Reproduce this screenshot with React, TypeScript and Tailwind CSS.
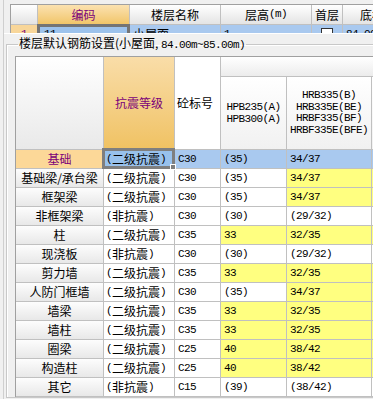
import React from 'react'

const cjk = "font-['Noto_Sans_CJK_SC','Noto_Sans',sans-serif]"
const mono = "font-['Liberation_Mono','Noto_Sans_CJK_SC',monospace] text-[11px] tracking-[-0.6px]"

interface SteelRow {
  name: string
  grade: string
  conc: string
  hpb: string
  hrb: string
  yHpb: boolean
  yHrb: boolean
}

const rows: SteelRow[] = [
  { name: '基础', grade: '二级抗震', conc: 'C30', hpb: '(35)', hrb: '34/37', yHpb: false, yHrb: false },
  { name: '基础梁/承台梁', grade: '二级抗震', conc: 'C30', hpb: '(35)', hrb: '34/37', yHpb: false, yHrb: true },
  { name: '框架梁', grade: '二级抗震', conc: 'C30', hpb: '(35)', hrb: '34/37', yHpb: false, yHrb: true },
  { name: '非框架梁', grade: '非抗震', conc: 'C30', hpb: '(30)', hrb: '(29/32)', yHpb: false, yHrb: false },
  { name: '柱', grade: '二级抗震', conc: 'C35', hpb: '33', hrb: '32/35', yHpb: true, yHrb: true },
  { name: '现浇板', grade: '非抗震', conc: 'C30', hpb: '(30)', hrb: '(29/32)', yHpb: false, yHrb: false },
  { name: '剪力墙', grade: '二级抗震', conc: 'C35', hpb: '33', hrb: '32/35', yHpb: true, yHrb: true },
  { name: '人防门框墙', grade: '二级抗震', conc: 'C30', hpb: '(35)', hrb: '34/37', yHpb: false, yHrb: true },
  { name: '墙梁', grade: '二级抗震', conc: 'C35', hpb: '33', hrb: '32/35', yHpb: true, yHrb: true },
  { name: '墙柱', grade: '二级抗震', conc: 'C35', hpb: '33', hrb: '32/35', yHpb: true, yHrb: true },
  { name: '圈梁', grade: '二级抗震', conc: 'C25', hpb: '40', hrb: '38/42', yHpb: true, yHrb: true },
  { name: '构造柱', grade: '二级抗震', conc: 'C25', hpb: '40', hrb: '38/42', yHpb: true, yHrb: true },
  { name: '其它', grade: '非抗震', conc: 'C15', hpb: '(39)', hrb: '(38/42)', yHpb: false, yHrb: false },
]

const line = 'border-r border-b border-[#c0c0c0]'

function FloorTable() {
  const head = `h-[20px] ${line} bg-linear-to-b from-white to-[#e4e4e4] flex items-center justify-center`
  return (
    <div className="ml-[6px] mt-[4px] h-[29px] shrink-0 overflow-hidden border-l border-t border-[#a0a0a0]">
      <div className="grid grid-cols-[27px_92px_91px_91px_31px_200px]">
        <div className={head} />
        <div className={`h-[20px] ${line} bg-linear-to-b from-[#fbe2b0] to-[#f1c568] flex items-center justify-center text-[#7a007a]`}>编码</div>
        <div className={head}>楼层名称</div>
        <div className={head}>
          层高<span className={mono}>(m)</span>
        </div>
        <div className={head}>首层</div>
        <div className={`${head} justify-start pl-[17px]`}>底标高(m)</div>

        {/* 第一行被下面的面板盖住，只露出上半截 */}
        <div className={`h-[19px] ${line} bg-[#f8d699] flex items-center justify-center text-[#7a007a] ${mono}`}>1</div>
        <div className={`relative h-[19px] ${line} bg-[#9cc2ec] flex items-center pl-[6px] ${mono}`}>
          11
          <div className="absolute -left-[1px] -top-[1px] -right-[1px] -bottom-[1px] border-[3px] border-[#747474]" />
        </div>
        <div className={`h-[19px] ${line} bg-[#a9c9ef] flex items-center pl-[3px]`}>小屋面</div>
        <div className={`h-[19px] ${line} bg-[#a9c9ef] flex items-center pl-[3px] ${mono}`}>1</div>
        <div className={`h-[19px] ${line} bg-[#a9c9ef] flex items-center justify-center`}>
          <div className="w-[12px] h-[12px] border border-[#333] bg-white" />
        </div>
        <div className={`h-[19px] ${line} bg-[#a9c9ef] flex items-center pl-[3px] ${mono}`}>84.00</div>
      </div>
    </div>
  )
}

function SteelTable() {
  return (
    <div className="ml-[8px] mt-[4px] w-[420px] border-l border-t border-[#a0a0a0] bg-white">
      <div className="grid grid-cols-[88px_71px_46px_66px_85px_64px]">
        <div className={`row-span-2 ${line} bg-linear-to-b from-white to-[#e9e9e9]`} />
        <div className={`row-span-2 ${line} bg-linear-to-b from-[#f9dda8] to-[#f0c262] flex items-center justify-center text-[#7a007a]`}>
          抗震等级
        </div>
        <div className={`row-span-2 ${line} bg-white flex items-center pl-[2px]`}>砼标号</div>
        <div className={`col-span-3 h-[20px] border-b border-[#c0c0c0] bg-linear-to-b from-white to-[#ececec]`} />
        <div className={`h-[73px] ${line} bg-linear-to-b from-white to-[#f1f1f1] flex flex-col items-center justify-center leading-[12px] ${mono}`}>
          <span>HPB235(A)</span>
          <span>HPB300(A)</span>
        </div>
        <div className={`h-[73px] ${line} bg-linear-to-b from-white to-[#f1f1f1] flex flex-col items-center justify-center leading-[11.5px] ${mono}`}>
          <span>HRB335(B)</span>
          <span>HRB335E(BE)</span>
          <span>HRBF335(BF)</span>
          <span>HRBF335E(BFE)</span>
        </div>
        <div className={`h-[73px] ${line} bg-linear-to-b from-white to-[#f1f1f1]`} />

        {rows.map((r, i) => {
          const first = i === 0
          const blue = 'bg-[#a9c9ef]'
          const hpbBg = first ? blue : r.yHpb ? 'bg-[#ffff80]' : 'bg-white'
          const hrbBg = first ? blue : r.yHrb ? 'bg-[#ffff80]' : 'bg-white'
          return (
            <React.Fragment key={r.name}>
              <div
                className={`h-[19px] ${line} flex items-center justify-center ${
                  first ? 'bg-[#fcd898] text-[#7a007a]' : 'bg-linear-to-b from-[#fdfdfd] to-[#e8e8e8]'
                }`}
              >
                {r.name}
              </div>
              <div className={`relative h-[19px] ${line} flex items-center pl-[2px] ${first ? 'bg-[#98c1ec]' : 'bg-white'}`}>
                <span className={mono}>(</span>
                {r.grade}
                <span className={mono}>)</span>
                {first && (
                  <div className="absolute -left-[2px] -top-[2px] -right-[1px] -bottom-[1px] z-10 border-[3px] border-[#7f7f7f]">
                    <div className="absolute -right-[4px] -bottom-[4px] w-[6px] h-[6px] bg-[#7f7f7f] border border-white" />
                  </div>
                )}
              </div>
              <div className={`h-[19px] ${line} flex items-center pl-[3px] ${first ? blue : 'bg-white'} ${mono}`}>{r.conc}</div>
              <div className={`h-[19px] ${line} flex items-center pl-[3px] ${hpbBg} ${mono}`}>{r.hpb}</div>
              <div className={`h-[19px] ${line} flex items-center pl-[3px] ${hrbBg} ${mono}`}>{r.hrb}</div>
              <div className={`h-[19px] ${line} ${hrbBg}`} />
            </React.Fragment>
          )
        })}
      </div>
    </div>
  )
}

export default function App() {
  return (
    <div className={`w-[373px] h-[399px] bg-[#f0f0f0] overflow-hidden flex text-[12px] text-black ${cjk}`}>
      <div className="w-[4px] shrink-0 border-r border-[#cfcfcf]" />
      <div className="flex-1 min-w-0 flex flex-col overflow-hidden">
        <FloorTable />
        <div className="flex-1 border-t border-white pt-[2px]">
          <fieldset className="ml-[2px] w-[480px] border border-[#c8c8c8] shadow-[inset_1px_1px_0_#ffffff]">
            <legend className="ml-[11px] px-[1px] leading-[14px]">
              楼层默认钢筋设置(小屋面, <span className={mono}>84.00m~85.00m)</span>
            </legend>
            <SteelTable />
          </fieldset>
        </div>
      </div>
    </div>
  )
}
